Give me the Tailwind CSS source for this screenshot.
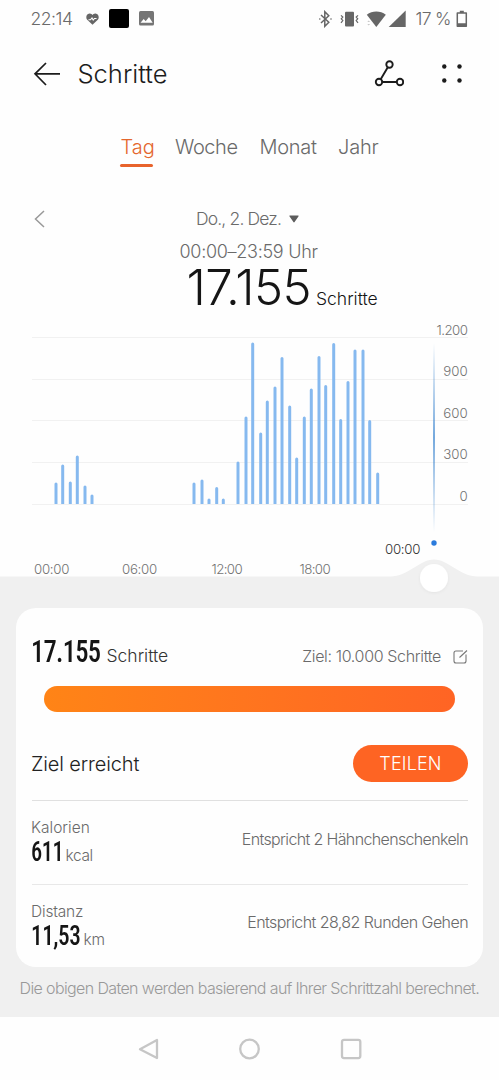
<!DOCTYPE html>
<html lang="de">
<head>
<meta charset="utf-8">
<title>Schritte</title>
<script src="https://cdn.jsdelivr.net/npm/@tailwindcss/browser@4"></script>
</head>
<body class="w-[499px] h-[1080px] overflow-hidden bg-[#f0f0f0] font-['Inter','Liberation_Sans',sans-serif] font-light text-[#6a6a6a] whitespace-nowrap">

<div class="h-[308px] bg-[#fefefe]">
  <!-- Status bar -->
  <div class="flex h-[37px] items-center justify-between pl-[30.5px] pr-[31px] leading-none">
    <div class="flex items-center">
      <span class="w-[55px] text-[17.5px] tracking-[-0.45px]">22:14</span>
      <svg class="h-3 w-[13px]" viewBox="0 0 13 12" fill="none"><path d="M6.500 11.800 1.200 6.800C-.5 5 .1.700 3.500.500 5 .400 6 1.200 6.500 2 7 1.200 8 .400 9.500.500 12.900.700 13.500 5 11.800 6.800Z" fill="#666"/><path d="M2.500 6.800h2L6 5l1.200 2L8.500 5.500h2" stroke="#fff" stroke-width="1.100"/></svg>
      <div class="ml-[10.500px] h-[19px] w-[19.500px] rounded-[2px] bg-black"></div>
      <svg class="ml-[10.500px] h-[14.500px] w-[15px]" viewBox="0 0 15 14.500"><rect width="15" height="14.500" rx="1.500" fill="#757575"/><path d="M1.500 11.800 4.700 8l2 2.200L10 6l3.700 5.800Z" fill="#fff"/></svg>
    </div>
    <div class="flex items-center">
      <svg class="h-[18px] w-[97px]" viewBox="0 0 97 18" fill="#666">
        <path d="m2 5 7.800 7.300-4 4V1.700l4 4L2 13" stroke="#666" stroke-width="1.500" fill="none"/>
        <circle cx=".8" cy="9" r=".8"/><circle cx="12" cy="9" r=".8"/>
        <rect x="26" y="1.800" width="9" height="14.700" rx="1"/>
        <path d="m22 5.300 1.800 1.800-1.500 1.700 1.500 1.700-1.800 2.300M39 5.300l-1.800 1.800 1.500 1.700-1.500 1.700 1.800 2.300" stroke="#666" stroke-width="1.200" fill="none"/>
        <path d="M47.800 4.700c5.500-4.200 13.500-4.200 19 0L57.300 17Z"/>
        <path d="m48.300 12 1.400-1.600 1.400 1.600ZM48.300 14h2.800l-1.400 1.600Z" fill="#c8c8c8"/>
        <path d="M69.700 17 86.700.500V17Z"/>
      </svg>
      <span class="w-[40.500px] text-[17.500px] tracking-[-0.7px]">17 %</span>
      <svg class="h-[18px] w-[12px]" viewBox="0 0 12 18" fill="#666"><path d="M1.300 3h9v13.200h-9Z" stroke="#666" stroke-width="1.500" stroke-linejoin="round" fill="none"/><path d="M3.800.7h4V3h-4ZM1.300 13.300h9v3h-9Z"/></svg>
    </div>
  </div>

  <!-- Title bar -->
  <div class="flex h-[73px] items-center pl-[33px] pr-[35px] text-[#1c1c1c]">
    <svg class="h-6 w-7" viewBox="0 0 28 24" fill="none" stroke="currentColor" stroke-width="1.700"><path d="M27 11.800H2M13 1 2 11.800 13 23"/></svg>
    <h1 class="ml-[16.500px] text-[25.5px] leading-none">Schritte</h1>
    <svg class="ml-auto h-[27px] w-[30px]" viewBox="0 0 30 27" fill="none" stroke="currentColor" stroke-width="1.900"><circle cx="15.500" cy="4.500" r="3.200"/><circle cx="5" cy="22" r="3.200"/><circle cx="26" cy="22" r="3.200"/><path d="M13.800 7.200 6.700 19.200M8.200 22h14.600"/></svg>
    <svg class="ml-[38.500px] h-[20px] w-[22px]" viewBox="0 0 22 20" fill="currentColor"><circle cx="2.300" cy="2.500" r="2.200"/><circle cx="17.500" cy="2.500" r="2.200"/><circle cx="2.300" cy="16.500" r="2.200"/><circle cx="17.500" cy="16.500" r="2.200"/></svg>
  </div>

  <!-- Range tabs -->
  <nav class="flex h-[73px] items-center pl-[120.5px] text-xl leading-none">
    <div class="relative w-[54.5px] text-[#e4672e]">Tag<span class="absolute -left-[0.5px] top-[27px] h-[3px] w-[33px] rounded-full bg-[#e8632c]"></span></div>
    <div class="w-[84.500px] tracking-[-0.41px]">Woche</div>
    <div class="w-[78.5px] tracking-[-0.28px]">Monat</div>
    <div class="tracking-[-0.2px]">Jahr</div>
  </nav>

  <!-- Selected day -->
  <div class="mt-[18px] flex h-9 items-center pl-[34px] text-[17.5px] leading-none">
    <svg class="h-[18px] w-[11px]" viewBox="0 0 11 18" fill="none" stroke="#999" stroke-width="1.500"><path d="M10 1 1.500 9 10 17"/></svg>
    <span class="ml-[151px] w-[93px] tracking-[-0.85px]">Do., 2. Dez.</span>
    <svg class="h-2 w-[10px]" viewBox="0 0 10 8"><path d="M1 .5h8c.6 0 .8.500.400 1L5.600 7c-.3.500-.9.500-1.200 0L.6 1.500C.2 1 .4.500 1 .500Z" fill="#5c5c5c"/></svg>
  </div>
  <div class="flex h-[29px] items-center pl-[179.500px] text-lg leading-none tracking-[-0.29px]">00:00–23:59 Uhr</div>
  <div class="flex h-[42px] items-baseline pl-[186.500px] leading-[44px] text-[#151515]">
    <span class="w-[129.500px] text-[49px] tracking-[-0.5px]">17.155</span>
    <span class="text-[17.5px]">Schritte</span>
  </div>
</div>

<!-- Step chart -->
<svg class="block h-[292px] w-[499px]" viewBox="0 308 499 292">
  <defs>
    <linearGradient id="cursor" x1="0" y1="343" x2="0" y2="532" gradientUnits="userSpaceOnUse"><stop offset="0" stop-color="#3a84cf" stop-opacity="0"/><stop offset=".5" stop-color="#3a84cf"/><stop offset="1" stop-color="#3a84cf" stop-opacity="0"/></linearGradient>
    <filter id="soft" x="-50%" y="-50%" width="200%" height="200%"><feDropShadow dx="0" dy="1" stdDeviation="1.500" flood-opacity=".05"/></filter>
  </defs>
  <path d="M0 307H499V576.500H478C459 576.500 449 559.500 434 559.500S409 576.500 390 576.500H0Z" fill="#fefefe"/>
  <path d="M32 337.500H468M32 379.500H468M32 420.500H468M32 462.500H468" stroke="#f1f1f1"/>
  <path d="M56 506V484M62.700 506V466M70.300 506V483M77.300 506V457M85 506V487M92 506V496M194 506V484M202 506V481M209 506V500M216.700 506V488.500M223.300 506V500M238 506V463M246 506V418M252.700 506V344M260.700 506V434M267.300 506V402M275 506V388M282 506V358.500M289.700 506V407M296.700 506V459M304.300 506V418M311.300 506V390M319 506V357.500M325.700 506V386.500M333.700 506V344.500M340.700 506V420.500M348 506V382.500M355 506V351M363 506V351M369.700 506V421.500M377.700 506V474" stroke="#86b9ef" stroke-width="3" stroke-linecap="round"/>
  <path d="M0 504H499V509H0Z" fill="#fefefe"/>
  <path d="M32 504.500H468" stroke="#f1f1f1"/>
  <rect x="433.300" y="343" width="1.400" height="189" fill="url(#cursor)"/>
  <circle cx="434" cy="543" r="2.700" fill="#2b7bdc"/>
  <circle cx="434" cy="578" r="14" fill="#fff" filter="url(#soft)"/>
  <g fill="#737373" font-size="13.300">
    <text x="436.500" y="334.800" letter-spacing="-.55">1.200</text>
    <text x="443.300" y="376.300">900</text>
    <text x="443.300" y="417.800">600</text>
    <text x="443.300" y="459.300">300</text>
    <text x="459.500" y="500.800">0</text>
    <text x="34" y="573.500" letter-spacing="-.3">00:00</text>
    <text x="122" y="573.500" letter-spacing="-.3">06:00</text>
    <text x="211.500" y="573.500" letter-spacing="-.6">12:00</text>
    <text x="299.500" y="573.500" letter-spacing="-.6">18:00</text>
    <text x="385" y="553.500" letter-spacing="-.3" fill="#333">00:00</text>
  </g>
</svg>

<!-- Goal card -->
<section class="mx-4 mt-2 h-[359px] rounded-[20px] bg-[#fefefe] pl-4 pr-[15px] leading-none">
  <div class="flex h-[78px] items-baseline pt-[27px]">
    <span class="w-[74.500px] text-[#151515]"><span class="-ml-px inline-block origin-left scale-x-[0.83] font-['Roboto'] text-[32px] leading-8 font-medium tracking-[-0.9px] font-stretch-[75%]">17.155</span></span>
    <span class="text-[17.500px] text-[#333]">Schritte</span>
    <span class="ml-auto text-base tracking-[-0.35px]">Ziel: 10.000 Schritte</span>
    <svg class="ml-3 h-[14px] w-[15px] self-start mt-[14.500px]" viewBox="0 0 15 14" fill="none" stroke="#777" stroke-width="1.100"><path d="M10 1H3Q1 1 1 3v8q0 2 2 2h8q2 0 2-2V4.500M6.500 7.500 14 .5"/></svg>
  </div>
  <div class="ml-3 mr-[13px] h-[26px] rounded-full bg-linear-to-r from-[#ff8416] to-[#ff6424]"></div>
  <div class="mt-[33px] flex h-[37px] items-center justify-between">
    <span class="-ml-px text-xl tracking-[-0.13px] text-[#222]">Ziel erreicht</span>
    <button class="h-[37px] w-[115px] rounded-full bg-[#fe6423] text-lg leading-none font-light text-white tracking-[0.15px]">TEILEN</button>
  </div>
  <div class="mt-[18px] h-px bg-[#e0e0e0]"></div>
  <div class="flex h-[83px] items-center justify-between">
    <div>
      <div class="-ml-px pt-px text-[15.500px]">Kalorien</div>
      <div class="mt-[3px] flex items-baseline"><span class="w-[33.500px] text-[#151515]"><span class="-ml-px inline-block origin-left scale-x-[0.83] font-['Roboto'] text-[27px] leading-7 font-medium tracking-[-0.5px] font-stretch-[75%]">611</span></span><span class="text-[15.500px] tracking-[-0.39px]">kcal</span></div>
    </div>
    <span class="-mt-[8px] text-base tracking-[-0.64px]">Entspricht 2 Hähnchenschenkeln</span>
  </div>
  <div class="h-px bg-[#e8e8e8]"></div>
  <div class="flex h-[83px] items-center justify-between">
    <div>
      <div class="-ml-px pt-px text-[15.500px] tracking-[-0.19px]">Distanz</div>
      <div class="mt-[3px] flex items-baseline"><span class="w-[51.500px] text-[#151515]"><span class="-ml-px inline-block origin-left scale-x-[0.86] font-['Roboto'] text-[27px] leading-7 font-medium tracking-[-0.5px] font-stretch-[75%]">11,53</span></span><span class="text-[15.500px] tracking-[-0.19px]">km</span></div>
    </div>
    <span class="-mt-[9px] text-base tracking-[-0.57px]">Entspricht 28,82 Runden Gehen</span>
  </div>
</section>
<p class="flex h-[50px] items-center pb-[8px] pl-[19.500px] text-base leading-none tracking-[-0.62px] text-[#999]">Die obigen Daten werden basierend auf Ihrer Schrittzahl berechnet.</p>

<!-- System navigation -->
<footer class="flex h-[63px] items-center bg-[#fefefe] pl-[138px]">
  <svg class="h-[22px] w-[224px]" viewBox="0 0 224 22" fill="none" stroke="#c6c6c6" stroke-width="2.300" stroke-linejoin="round"><path d="M19 2v18L2 11.200Z"/><circle cx="111.500" cy="11" r="9.300"/><rect x="204" y="1.800" width="18.300" height="18.300" rx="2"/></svg>
</footer>
</body>
</html>
